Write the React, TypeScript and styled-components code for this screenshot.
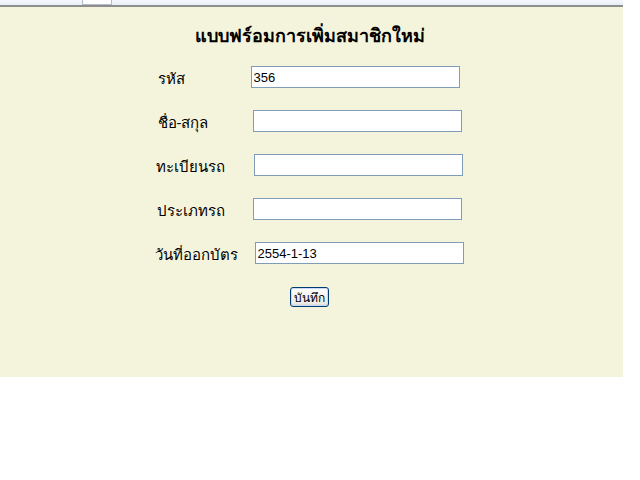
import React from "react";
import styled, { createGlobalStyle } from "styled-components";

const Global = createGlobalStyle`
  html, body { margin: 0; padding: 0; background: #ffffff; }
  body { font-family: Tahoma, "Liberation Sans", "DejaVu Sans", sans-serif; }
`;

const Chrome = styled.div`
  height: 5px;
  width: 623px;
  background: linear-gradient(#f4f7fc, #e9eef7);
  border-bottom: 2px solid #8e8e8e;
  display: flex;
`;

const ChromeTab = styled.div`
  margin-left: 82px;
  width: 28px;
  height: 4px;
  border: 1px solid #b4bccb;
  border-top: none;
  background: #ffffff;
`;

const Panel = styled.div`
  width: 623px;
  height: 370px;
  background: #f4f4dc;
  display: flex;
  flex-direction: column;
  align-items: center;
  box-sizing: border-box;
  padding-top: 18px;
`;

const Title = styled.h1`
  margin: 0 0 0 -4px;
  font-size: 18px;
  font-weight: bold;
  color: #000;
  line-height: 22px;
  height: 22px;
`;

const Form = styled.div`
  margin-top: 19px;
  margin-right: 6px;
  display: grid;
  grid-template-columns: 96px 212px;
  row-gap: 22px;
  align-items: center;
`;

const Label = styled.label<{ $dx?: number }>`
  font-size: 15px;
  color: #000;
  padding-left: ${(p) => p.$dx ?? 0}px;
  padding-top: 2px;
  margin-bottom: -2px;
  line-height: 22px;
`;

const Input = styled.input<{ $dx?: number }>`
  box-sizing: border-box;
  width: 209px;
  height: 22px;
  margin: 0 0 0 ${(p) => p.$dx ?? 0}px;
  border: 1px solid #7f9db9;
  background: #ffffff;
  padding: 0 2px;
  font-family: Tahoma, "Liberation Sans", sans-serif;
  font-size: 13px;
  color: #000;
  outline: none;
`;

const Button = styled.button`
  margin-top: 23px;
  height: 20px;
  width: 39px;
  padding: 0;
  border: 1px solid #003c74;
  border-radius: 3px;
  background: linear-gradient(#ffffff, #ecebe6 85%, #d6d0c5);
  box-shadow: inset 0 0 0 1px #c8d8f8;
  font-family: Tahoma, "Liberation Sans", sans-serif;
  font-size: 12px;
  color: #000;
  margin-left: -4px;
`;

const rows = [
  { label: "รหัส", value: "356", ldx: 3, idx: 0 },
  { label: "ชื่อ-สกุล", value: "", ldx: 3, idx: 2 },
  { label: "ทะเบียนรถ", value: "", ldx: 1, idx: 3 },
  { label: "ประเภทรถ", value: "", ldx: 2, idx: 2 },
  { label: "วันที่ออกบัตร", value: "2554-1-13", ldx: 0, idx: 4 },
];

export default function App() {
  return (
    <>
      <Global />
      <Chrome>
        <ChromeTab />
      </Chrome>
      <Panel>
        <Title>แบบฟร์อมการเพิ่มสมาชิกใหม่</Title>
        <Form>
          {rows.map((r) => (
            <React.Fragment key={r.label}>
              <Label $dx={r.ldx}>{r.label}</Label>
              <Input $dx={r.idx} defaultValue={r.value} />
            </React.Fragment>
          ))}
        </Form>
        <Button>บันทึก</Button>
      </Panel>
    </>
  );
}
